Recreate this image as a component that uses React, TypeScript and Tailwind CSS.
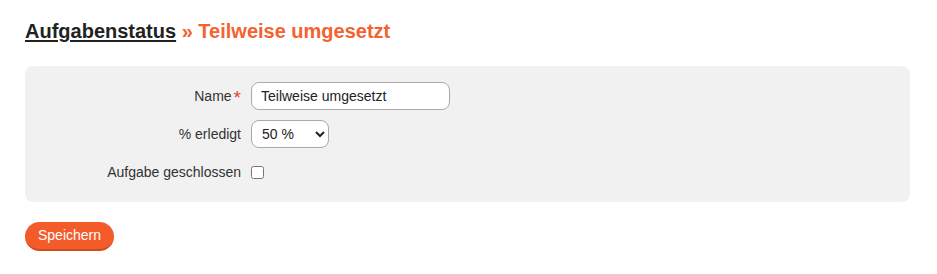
export default function App() {
  return (
    <div
      className="min-h-screen bg-white pl-[25px] pr-[27px] text-[14px] text-[#333]"
      style={{ fontFamily: '"Liberation Sans", Arial, sans-serif' }}
    >
      <h1 className="pt-[19px] text-[20px] font-bold leading-6">
        <a href="#" className="text-[#222] underline decoration-2 underline-offset-2">
          Aufgabenstatus
        </a>
        <span className="text-[#f4622f]"> » Teilweise umgesetzt</span>
      </h1>

      <form className="mt-[23px] rounded-lg bg-[#f1f1f1] pt-4 pb-4">
        <div className="grid grid-cols-[216px_1fr] items-center gap-x-2.5 gap-y-2.5">
          <label className="flex h-7 items-center justify-end">
            Name
            <span className="relative top-[1px] ml-0.5 text-[19px] leading-none text-[#e8432b]">*</span>
          </label>
          <div className="h-7">
            <input
              type="text"
              defaultValue="Teilweise umgesetzt"
              className="h-7 w-[199px] rounded-lg border border-[#a9a9a9] bg-white px-[9px] text-[14px] text-[#222] outline-none"
            />
          </div>

          <label className="flex h-7 items-center justify-end">% erledigt</label>
          <div className="h-7">
            <select
              defaultValue="50"
              className="h-7 w-[78px] rounded-lg border border-[#a9a9a9] bg-white pl-[6px] text-[14px] text-[#222] outline-none"
            >
              <option value="0">0 %</option>
              <option value="25">25 %</option>
              <option value="50">50 %</option>
              <option value="75">75 %</option>
              <option value="100">100 %</option>
            </select>
          </div>

          <label className="flex h-7 items-center justify-end">Aufgabe geschlossen</label>
          <div className="flex h-7 items-center">
            <input type="checkbox" className="m-0 h-[13px] w-[13px]" />
          </div>
        </div>
      </form>

      <button
        type="button"
        className="mt-5 h-[29px] rounded-full border-b-2 border-[#d44a1f] bg-[#f35b2b] px-[13px] text-[14px] text-white"
      >
        Speichern
      </button>
    </div>
  );
}
